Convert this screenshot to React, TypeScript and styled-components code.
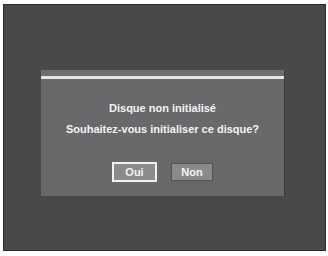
import React from "react";
import styled, { createGlobalStyle } from "styled-components";

const Global = createGlobalStyle`
  html, body { margin: 0; padding: 0; background: #ffffff; }
  body { width: 328px; height: 256px; overflow: hidden; font-family: "Liberation Sans", Arial, sans-serif; }
`;

const Page = styled.div`
  width: 328px;
  height: 256px;
  box-sizing: border-box;
  padding: 4px 2px 5px 3px;
  display: flex;
`;

const Screen = styled.div`
  flex: 1;
  box-sizing: border-box;
  background: #48494b;
  border: 1px solid #2a2b2c;
  padding: 65px 0 0 37px;
  display: flex;
  align-items: flex-start;
`;

const Dialog = styled.div`
  width: 243px;
  height: 126px;
  background: #69696b;
  display: flex;
  flex-direction: column;
  box-shadow: 1px 0 0 #3c3d3e;
`;

const TopStrip = styled.div`
  height: 6px;
  background: #6e6e70;
`;

const Rule = styled.div`
  height: 3px;
  background: #e4e4e4;
`;

const Body = styled.div`
  flex: 1;
  display: flex;
  flex-direction: column;
  align-items: center;
  padding-top: 19px;
`;

const Line = styled.div`
  color: #f4f4f4;
  font-weight: bold;
  font-size: 11px;
  line-height: 21px;
  white-space: nowrap;
`;

const Buttons = styled.div`
  display: flex;
  gap: 14px;
  margin-top: 22px;
  align-items: center;
`;

const Button = styled.div<{ $selected?: boolean }>`
  box-sizing: border-box;
  width: ${(p) => (p.$selected ? "45px" : "42px")};
  height: ${(p) => (p.$selected ? "20px" : "18px")};
  background: #8b8b8c;
  border: ${(p) => (p.$selected ? "2px solid #f2f2f2" : "1px solid #505152")};
  color: #f4f4f4;
  font-weight: bold;
  font-size: 11px;
  display: flex;
  align-items: center;
  justify-content: center;
`;

export default function App() {
  return (
    <>
      <Global />
      <Page>
        <Screen>
          <Dialog>
            <TopStrip />
            <Rule />
            <Body>
              <Line>Disque non initialisé</Line>
              <Line>Souhaitez-vous initialiser ce disque?</Line>
              <Buttons>
                <Button $selected>Oui</Button>
                <Button>Non</Button>
              </Buttons>
            </Body>
          </Dialog>
        </Screen>
      </Page>
    </>
  );
}
